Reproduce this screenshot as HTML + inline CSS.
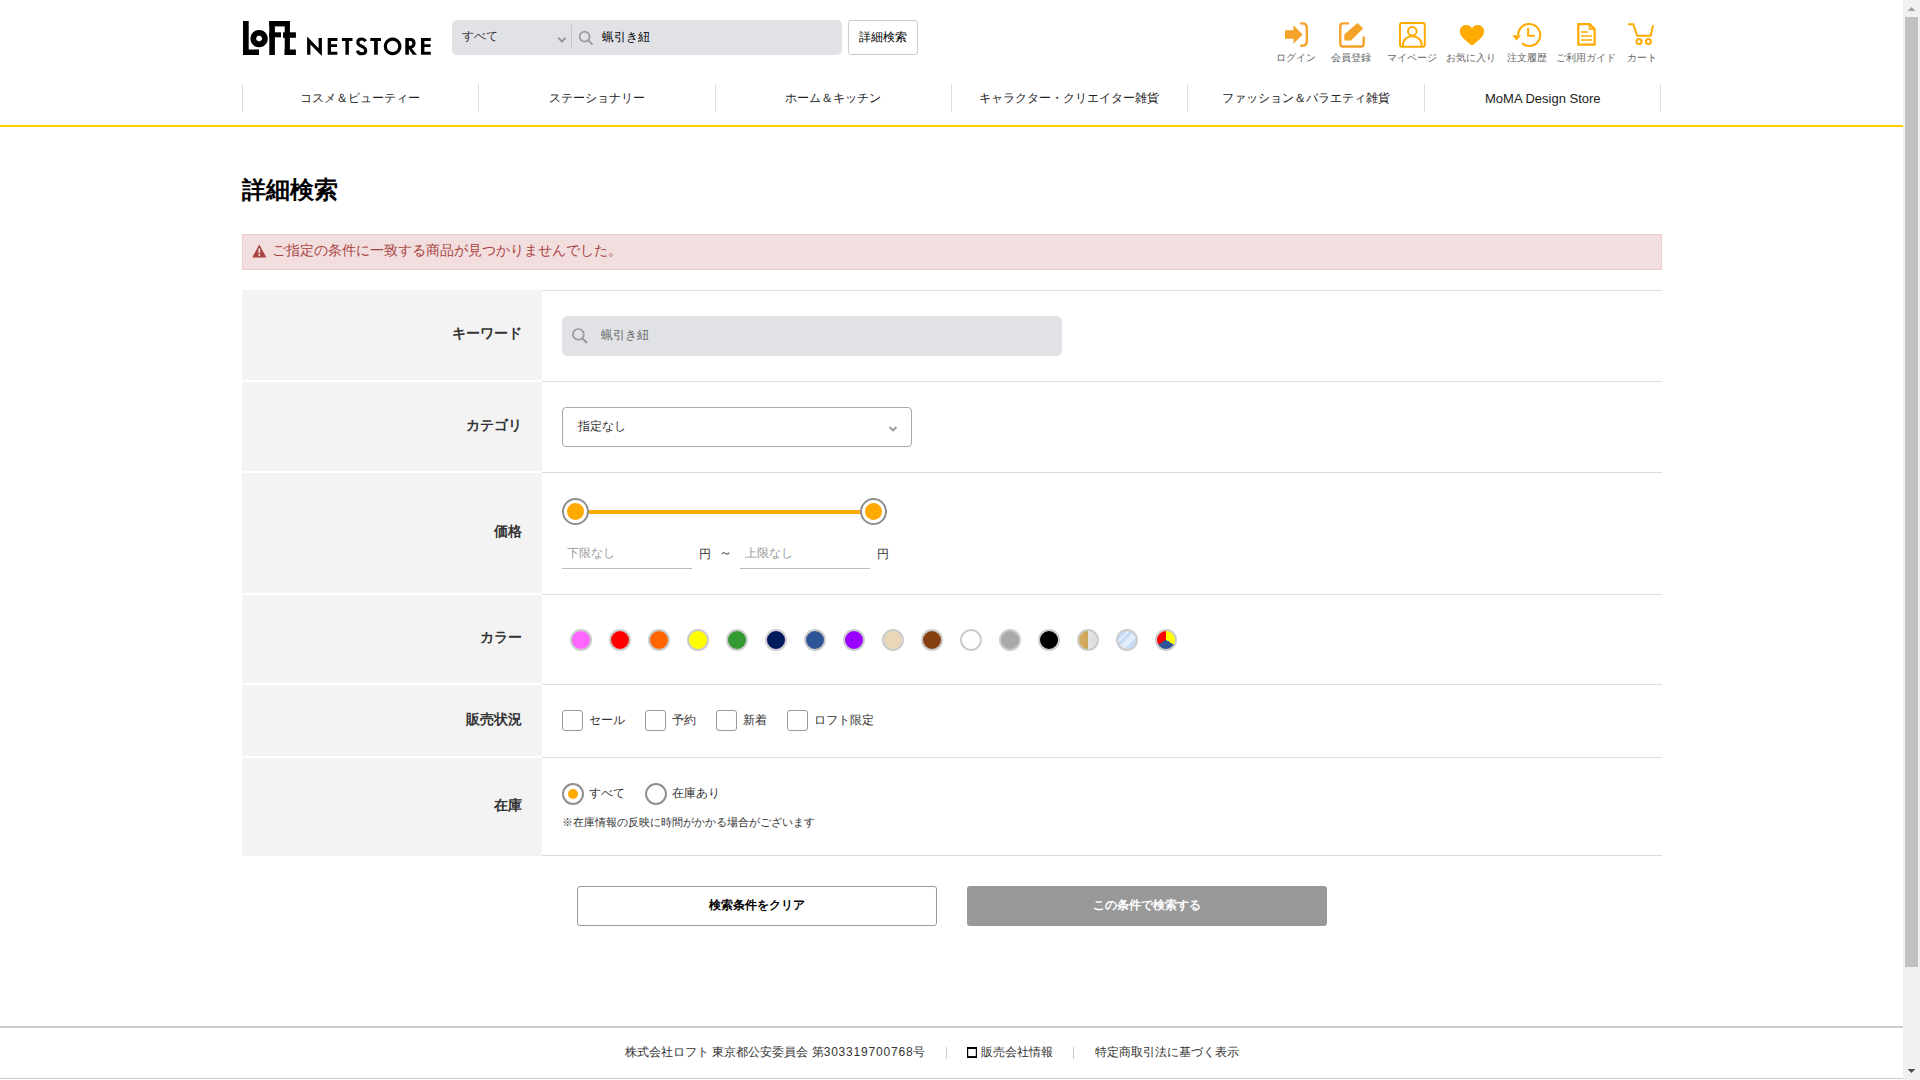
<!DOCTYPE html>
<html lang="ja"><head><meta charset="utf-8"><title>詳細検索</title>
<style>
*{box-sizing:border-box;margin:0;padding:0}
html,body{width:1920px;height:1080px;overflow:hidden;background:#fff}
body{position:relative;font-family:"Liberation Sans",sans-serif;color:#333}
.a{position:absolute}
.t{position:absolute;white-space:nowrap;line-height:1}
.lbl{top:52.5px;font-size:10px;color:#666;transform:translateX(-50%)}
.th{right:1398px;font-size:14px;font-weight:bold;color:#333}
.nav{top:92px;font-size:12px;color:#222;transform:translateX(-50%)}
</style></head><body>

<!-- HEADER -->
<svg class="a" style="left:0;top:0" width="460" height="70" viewBox="0 0 460 70">
 <g fill="#000">
  <!-- L -->
  <rect x="243" y="21" width="5.7" height="34"/>
  <rect x="243" y="49.5" width="16" height="5.5"/>
  <!-- o -->
  <path fill-rule="evenodd" d="M259.1,29.9a8.7,8.7 0 1,0 0.01,0z M259.1,35.7a2.9,2.9 0 1,1 -0.01,0z"/>
  <!-- F -->
  <rect x="269.3" y="21" width="5.6" height="34"/>
  <rect x="269.3" y="21" width="20.6" height="5.4"/>
  <rect x="269.3" y="32.3" width="11.7" height="5"/>
  <!-- t -->
  <rect x="284.7" y="21" width="5.2" height="34"/>
  <rect x="283" y="32.3" width="12.9" height="5.5"/>
  <rect x="284.7" y="49.5" width="11.2" height="5.5"/>
  <!-- N -->
  <path d="M307.1,54.8 L307.1,36.4 L318.6,48.2 L318.6,38 L321.9,38 L321.9,55.9 L310.4,44.6 L310.4,54.8 Z"/>
  <!-- E -->
  <path d="M327.7,38 H337.4 V40.9 H331 V44.2 H337 V47 H331 V51.7 H337.4 V54.8 H327.7 Z"/>
  <!-- T -->
  <path d="M341.9,38 H352.5 V40.9 H348.9 V54.8 H345.4 V40.9 H341.9 Z"/>
  <!-- S -->
  <path d="M365.6,41.2 C364.6,39.6 363.2,39 361.6,39 C359.4,39 357.8,40.3 357.8,42.4 C357.8,44.6 359.8,45.4 361.9,46.3 C364.1,47.2 365.7,48.2 365.7,50.7 C365.7,52.8 363.9,53.8 361.6,53.8 C359.5,53.8 357.9,52.6 357.5,50.6" fill="none" stroke="#000" stroke-width="3.1"/>
  <!-- T -->
  <path d="M370.3,38 H381 V40.9 H377.8 V54.8 H374.1 V40.9 H370.3 Z"/>
  <!-- O -->
  <path fill-rule="evenodd" d="M392.6,37.5a8.85,8.85 0 1,0 0.01,0z M392.6,40.7a5.65,5.65 0 1,1 -0.01,0z"/>
  <!-- R -->
  <path fill-rule="evenodd" d="M405.3,54.8 V38 H410.5 C413.8,38 415.6,40 415.6,43.3 C415.6,46 414.2,47.9 411.8,48.4 L417,54.8 H412.8 L408.9,49 V54.8 Z M408.9,40.9 V45.8 H410.3 C411.6,45.8 412.3,44.9 412.3,43.3 C412.3,41.8 411.6,40.9 410.3,40.9 Z"/>
  <!-- E -->
  <path d="M421,38 H430.8 V40.9 H424.4 V44.2 H430.5 V47 H424.4 V51.7 H430.8 V54.8 H421 Z"/>
 </g>
</svg>

<!-- search box -->
<div class="a" style="left:452px;top:20px;width:390px;height:35px;background:#e1e2e6;border-radius:5px"></div>
<div class="t" style="left:462px;top:30px;font-size:12px;color:#333">すべて</div>
<svg class="a" style="left:556px;top:35.5px" width="12" height="8" viewBox="0 0 12 8"><path d="M2.3,1.8 L6,5.5 L9.7,1.8" fill="none" stroke="#999" stroke-width="2"/></svg>
<div class="a" style="left:571px;top:25px;width:1px;height:23px;background:#c8c9cc"></div>
<svg class="a" style="left:578px;top:30px" width="16" height="16" viewBox="0 0 16 16"><circle cx="6.6" cy="6.6" r="5" fill="none" stroke="#999" stroke-width="1.6"/><path d="M10.3,10.3 L14.5,14.5" stroke="#999" stroke-width="1.8"/></svg>
<div class="t" style="left:602px;top:31px;font-size:12px;color:#000">蝋引き紐</div>
<div class="a" style="left:848px;top:20px;width:70px;height:35px;border:1px solid #ccc;border-radius:3px;background:#fff"></div>
<div class="t" style="left:859px;top:31px;font-size:12px;color:#000">詳細検索</div>

<!-- right icons placeholder -->
<svg class="a" style="left:1270px;top:15px" width="400" height="40" viewBox="1270 15 400 40">
 <!-- login -->
 <path d="M1285,30.3 H1293.5 V25.3 L1302.5,34.5 L1293.5,43.7 V38.7 H1285 Z" fill="#f5a229"/>
 <path d="M1300.2,23.4 H1302.5 C1305.2,23.4 1306.8,25 1306.8,27.8 V41.6 C1306.8,44.2 1305.2,45.8 1302.5,45.8 H1300.2" fill="none" stroke="#f5a229" stroke-width="2.4"/>
 <!-- register -->
 <path d="M1349,23.4 H1343 C1341.5,23.4 1340.3,24.6 1340.3,26.1 V43.8 C1340.3,45.3 1341.5,46.5 1343,46.5 H1361 C1362.5,46.5 1363.7,45.3 1363.7,43.8 V36.5" fill="none" stroke="#f5a229" stroke-width="2.4"/>
 <path d="M1357.5,23.1 L1363.2,28.6 L1351,40.6 H1344.3 V34.5 Z" fill="#f5a229"/>
 <!-- mypage -->
 <rect x="1400" y="23" width="24.8" height="23.8" rx="2" fill="none" stroke="#ffaa00" stroke-width="2"/>
 <circle cx="1412.3" cy="31.3" r="4.3" fill="none" stroke="#ffaa00" stroke-width="2"/>
 <path d="M1402.8,46.5 V45.5 C1402.8,40 1407,36.3 1412.3,36.3 C1417.6,36.3 1421.8,40 1421.8,45.5 V46.5" fill="none" stroke="#ffaa00" stroke-width="2"/>
 <!-- heart -->
 <path d="M1472,28.3 C1470.5,26 1468.6,25 1466.3,25 C1462.6,24.7 1459.9,27.6 1459.9,31.2 C1459.9,34.6 1462,37.2 1464.6,39.6 L1470.2,44.4 C1471.2,45.3 1472.8,45.3 1473.8,44.4 L1479.4,39.6 C1482,37.2 1484.1,34.6 1484.1,31.2 C1484.1,27.8 1481.4,25 1477.7,25 C1475.4,25 1473.5,26 1472,28.3 Z" fill="#ffaa00"/>
 <!-- history -->
 <path d="M1518.2,35 A11,11 0 1,1 1522.1,43.4" fill="none" stroke="#ffaa00" stroke-width="2.1"/>
 <path d="M1512.2,35.2 H1521 L1516.6,40.6 Z" fill="#ffaa00"/>
 <path d="M1528.1,28 V35.8 H1534.8" fill="none" stroke="#ffaa00" stroke-width="1.9"/>
 <!-- guide -->
 <path d="M1578.3,24.2 H1589.6 L1594.6,29 V44.6 H1578.3 Z" fill="none" stroke="#ffaa00" stroke-width="2.2"/>
 <path d="M1589.5,24.5 V28.9 H1594" fill="none" stroke="#ffaa00" stroke-width="1.6"/>
 <path d="M1581,32 H1588 M1581,36 H1592 M1581,40 H1592" stroke="#ffaa00" stroke-width="1.7"/>
 <!-- cart -->
 <path d="M1628,24.2 H1633.3 L1637.2,35.8 H1650.6 L1653.1,25.3" fill="none" stroke="#ffaa00" stroke-width="2"/>
 <circle cx="1639" cy="41.6" r="2.5" fill="none" stroke="#ffaa00" stroke-width="2"/>
 <circle cx="1648.4" cy="41.6" r="2.5" fill="none" stroke="#ffaa00" stroke-width="2"/>
</svg>
<div class="t lbl" style="left:1296px">ログイン</div>
<div class="t lbl" style="left:1351px">会員登録</div>
<div class="t lbl" style="left:1411.5px">マイページ</div>
<div class="t lbl" style="left:1471px">お気に入り</div>
<div class="t lbl" style="left:1526.5px">注文履歴</div>
<div class="t lbl" style="left:1586px">ご利用ガイド</div>
<div class="t lbl" style="left:1641.5px">カート</div>


<!-- NAV -->
<div class="a" style="left:242px;top:84px;width:1px;height:28px;background:#ddd"></div>
<div class="a" style="left:478px;top:84px;width:1px;height:28px;background:#ddd"></div>
<div class="a" style="left:715px;top:84px;width:1px;height:28px;background:#ddd"></div>
<div class="a" style="left:951px;top:84px;width:1px;height:28px;background:#ddd"></div>
<div class="a" style="left:1187px;top:84px;width:1px;height:28px;background:#ddd"></div>
<div class="a" style="left:1424px;top:84px;width:1px;height:28px;background:#ddd"></div>
<div class="a" style="left:1660px;top:84px;width:1px;height:28px;background:#ddd"></div>
<div class="t nav" style="left:360.2px">コスメ＆ビューティー</div>
<div class="t nav" style="left:596.5px">ステーショナリー</div>
<div class="t nav" style="left:832.8px">ホーム＆キッチン</div>
<div class="t nav" style="left:1069.2px">キャラクター・クリエイター雑貨</div>
<div class="t nav" style="left:1305.5px">ファッション＆バラエティ雑貨</div>
<div class="t nav" style="left:1542.8px;font-size:13px">MoMA Design Store</div>

<div class="a" style="left:0;top:125px;width:1903px;height:2px;background:#ffcc00"></div>

<!-- MAIN -->
<div class="t" style="left:242px;top:178px;font-size:24px;font-weight:bold;color:#000">詳細検索</div>

<div class="a" style="left:242px;top:234px;width:1420px;height:36px;background:#f2dede;border:1px solid #ebccd1"></div>

<svg class="a" style="left:252px;top:244px" width="15" height="14" viewBox="0 0 15 14"><path d="M7.3,0.5 L14.4,13.5 H0.2 Z" fill="#a94442"/><rect x="6.4" y="4.4" width="1.8" height="4.6" fill="#f2dede"/><rect x="6.4" y="10" width="1.8" height="1.8" fill="#f2dede"/></svg>
<div class="t" style="left:272px;top:243px;font-size:14px;color:#a94442">ご指定の条件に一致する商品が見つかりませんでした。</div>
<div class="a" style="left:542px;top:290px;width:1120px;height:1px;background:#ddd"></div>
<div class="a" style="left:242px;top:290px;width:300px;height:90px;background:#f3f3f3"></div>
<div class="a" style="left:542px;top:381px;width:1120px;height:1px;background:#ddd"></div>
<div class="t th" style="top:326px">キーワード</div>
<div class="a" style="left:242px;top:382px;width:300px;height:89px;background:#f3f3f3"></div>
<div class="a" style="left:542px;top:472px;width:1120px;height:1px;background:#ddd"></div>
<div class="t th" style="top:418px">カテゴリ</div>
<div class="a" style="left:242px;top:473px;width:300px;height:120px;background:#f3f3f3"></div>
<div class="a" style="left:542px;top:594px;width:1120px;height:1px;background:#ddd"></div>
<div class="t th" style="top:524px">価格</div>
<div class="a" style="left:242px;top:595px;width:300px;height:88px;background:#f3f3f3"></div>
<div class="a" style="left:542px;top:684px;width:1120px;height:1px;background:#ddd"></div>
<div class="t th" style="top:630px">カラー</div>
<div class="a" style="left:242px;top:685px;width:300px;height:71px;background:#f3f3f3"></div>
<div class="a" style="left:542px;top:757px;width:1120px;height:1px;background:#ddd"></div>
<div class="t th" style="top:712px">販売状況</div>
<div class="a" style="left:242px;top:758px;width:300px;height:98px;background:#f3f3f3"></div>
<div class="a" style="left:542px;top:855px;width:1120px;height:1px;background:#ddd"></div>
<div class="t th" style="top:798px">在庫</div>
<div class="a" style="left:562px;top:316px;width:500px;height:40px;background:#e1e2e6;border-radius:6px"></div>
<svg class="a" style="left:571px;top:327px" width="18" height="18" viewBox="0 0 18 18"><circle cx="7.4" cy="7.4" r="5.4" fill="none" stroke="#999" stroke-width="1.7"/><path d="M11.3,11.3 L16,16" stroke="#999" stroke-width="2"/></svg>
<div class="t" style="left:601px;top:329px;font-size:12px;color:#666">蝋引き紐</div>
<div class="a" style="left:562px;top:407px;width:350px;height:40px;border:1px solid #aaa;border-radius:4px;background:#fff"></div>
<div class="t" style="left:578px;top:420px;font-size:12px;color:#333">指定なし</div>
<svg class="a" style="left:888px;top:424.7px" width="10" height="8" viewBox="0 0 10 8"><path d="M1.5,2 L5,5.5 L8.5,2" fill="none" stroke="#999" stroke-width="1.8"/></svg>
<div class="a" style="left:588px;top:510px;width:273px;height:4px;background:#ffaa00"></div>
<div class="a" style="left:562px;top:498px;width:27px;height:27px;border:2px solid #8f8f8f;border-radius:50%;background:#fff"></div>
<div class="a" style="left:567px;top:503px;width:17px;height:17px;border-radius:50%;background:#ffaa00"></div>
<div class="a" style="left:860px;top:498px;width:27px;height:27px;border:2px solid #8f8f8f;border-radius:50%;background:#fff"></div>
<div class="a" style="left:865px;top:503px;width:17px;height:17px;border-radius:50%;background:#ffaa00"></div>
<div class="a" style="left:562px;top:568px;width:130px;height:1px;background:#bbb"></div>
<div class="a" style="left:740px;top:568px;width:130px;height:1px;background:#bbb"></div>
<div class="t" style="left:567px;top:547px;font-size:12px;color:#999">下限なし</div>
<div class="t" style="left:745px;top:547px;font-size:12px;color:#999">上限なし</div>
<div class="t" style="left:699px;top:548px;font-size:12px;color:#333">円</div>
<div class="t" style="left:719px;top:546px;font-size:13px;color:#333">～</div>
<div class="t" style="left:877px;top:548px;font-size:12px;color:#333">円</div>
<div class="a" style="left:570px;top:629px;width:22px;height:22px;border:2px solid #ccc;border-radius:50%;background:#ff66ff;background-origin:border-box"></div>
<div class="a" style="left:609px;top:629px;width:22px;height:22px;border:2px solid #ccc;border-radius:50%;background:#ff0000;background-origin:border-box"></div>
<div class="a" style="left:648px;top:629px;width:22px;height:22px;border:2px solid #ccc;border-radius:50%;background:#ff6600;background-origin:border-box"></div>
<div class="a" style="left:687px;top:629px;width:22px;height:22px;border:2px solid #ccc;border-radius:50%;background:#ffff00;background-origin:border-box"></div>
<div class="a" style="left:726px;top:629px;width:22px;height:22px;border:2px solid #ccc;border-radius:50%;background:#339933;background-origin:border-box"></div>
<div class="a" style="left:765px;top:629px;width:22px;height:22px;border:2px solid #ccc;border-radius:50%;background:#001a5e;background-origin:border-box"></div>
<div class="a" style="left:804px;top:629px;width:22px;height:22px;border:2px solid #ccc;border-radius:50%;background:#2f5597;background-origin:border-box"></div>
<div class="a" style="left:843px;top:629px;width:22px;height:22px;border:2px solid #ccc;border-radius:50%;background:#9900ff;background-origin:border-box"></div>
<div class="a" style="left:882px;top:629px;width:22px;height:22px;border:2px solid #ccc;border-radius:50%;background:#e8d8b8;background-origin:border-box"></div>
<div class="a" style="left:921px;top:629px;width:22px;height:22px;border:2px solid #ccc;border-radius:50%;background:#84400f;background-origin:border-box"></div>
<div class="a" style="left:960px;top:629px;width:22px;height:22px;border:2px solid #ccc;border-radius:50%;background:#ffffff;background-origin:border-box"></div>
<div class="a" style="left:999px;top:629px;width:22px;height:22px;border:2px solid #ccc;border-radius:50%;background:#aaaaaa;background-origin:border-box"></div>
<div class="a" style="left:1038px;top:629px;width:22px;height:22px;border:2px solid #ccc;border-radius:50%;background:#000000;background-origin:border-box"></div>
<div class="a" style="left:1077px;top:629px;width:22px;height:22px;border:2px solid #ccc;border-radius:50%;background:linear-gradient(90deg,#d9b060 0,#c9a458 50%,#e4e4e4 50%,#dcdcdc 100%);background-origin:border-box"></div>
<div class="a" style="left:1116px;top:629px;width:22px;height:22px;border:2px solid #ccc;border-radius:50%;background:linear-gradient(135deg,#c6dcf6 0,#c6dcf6 31%,#e6f0fb 31.5%,#e6f0fb 34.5%,#c6dcf6 35%,#c6dcf6 45.5%,#e3edfa 46%,#e3edfa 64%,#c6dcf6 64.5%,#c6dcf6 100%);background-origin:border-box"></div>
<div class="a" style="left:1155px;top:629px;width:22px;height:22px;border:2px solid #ccc;border-radius:50%;background:conic-gradient(#ffff00 0deg 120deg,#2f5597 120deg 240deg,#ff0000 240deg 360deg);background-origin:border-box"></div>
<div class="a" style="left:562px;top:710px;width:21px;height:21px;border:1px solid #999;border-radius:3px;background:#fff"></div>
<div class="t" style="left:589px;top:714px;font-size:12px;color:#333">セール</div>
<div class="a" style="left:645px;top:710px;width:21px;height:21px;border:1px solid #999;border-radius:3px;background:#fff"></div>
<div class="t" style="left:672px;top:714px;font-size:12px;color:#333">予約</div>
<div class="a" style="left:716px;top:710px;width:21px;height:21px;border:1px solid #999;border-radius:3px;background:#fff"></div>
<div class="t" style="left:743px;top:714px;font-size:12px;color:#333">新着</div>
<div class="a" style="left:787px;top:710px;width:21px;height:21px;border:1px solid #999;border-radius:3px;background:#fff"></div>
<div class="t" style="left:814px;top:714px;font-size:12px;color:#333">ロフト限定</div>
<div class="a" style="left:562px;top:783px;width:22px;height:22px;border:2px solid #8f8f8f;border-radius:50%"></div>
<div class="a" style="left:568px;top:789px;width:10px;height:10px;border-radius:50%;background:#ffaa00"></div>
<div class="t" style="left:589px;top:787px;font-size:12px;color:#333">すべて</div>
<div class="a" style="left:645px;top:783px;width:22px;height:22px;border:2px solid #8f8f8f;border-radius:50%"></div>
<div class="t" style="left:672px;top:787px;font-size:12px;color:#333">在庫あり</div>
<div class="t" style="left:562px;top:817px;font-size:11px;color:#333">※在庫情報の反映に時間がかかる場合がございます</div>
<div class="a" style="left:577px;top:886px;width:360px;height:40px;border:1px solid #999;border-radius:3px;background:#fff"></div>
<div class="t" style="left:757px;top:899px;font-size:12px;font-weight:bold;color:#000;transform:translateX(-50%)">検索条件をクリア</div>
<div class="a" style="left:967px;top:886px;width:360px;height:40px;border-radius:3px;background:#999"></div>
<div class="t" style="left:1147px;top:899px;font-size:12px;font-weight:bold;color:#fff;transform:translateX(-50%)">この条件で検索する</div>

<div class="a" style="left:0;top:1026px;width:1903px;height:2px;background:#ccc"></div>
<div class="a" style="left:0;top:1078px;width:1903px;height:1px;background:#ccc"></div>
<div class="t" style="left:625px;top:1046px;font-size:12px;color:#333">株式会社ロフト 東京都公安委員会 第<span style="letter-spacing:0.8px">303319700768</span>号</div>
<div class="a" style="left:946px;top:1047px;width:1px;height:12px;background:#ccc"></div>
<svg class="a" style="left:967px;top:1047px" width="10" height="11" viewBox="0 0 10 11"><rect x="0.6" y="1" width="8.8" height="9" fill="none" stroke="#000" stroke-width="1.2"/><rect x="0" y="0" width="10" height="2" fill="#000"/><rect x="0" y="9.2" width="10" height="1.8" fill="#000"/></svg>
<div class="t" style="left:981px;top:1046px;font-size:12px;color:#333">販売会社情報</div>
<div class="a" style="left:1073px;top:1047px;width:1px;height:12px;background:#ccc"></div>
<div class="t" style="left:1095px;top:1046px;font-size:12px;color:#333">特定商取引法に基づく表示</div>


<!-- scrollbar -->
<div class="a" style="left:1903px;top:0;width:17px;height:1080px;background:#f1f1f1"></div>
<div class="a" style="left:1905px;top:17px;width:13px;height:950px;background:#c1c1c1"></div>
<svg class="a" style="left:1903px;top:0" width="17" height="17"><path d="M4.5,11 L8.5,7 L12.5,11Z" fill="#a3a3a3"/></svg>
<svg class="a" style="left:1903px;top:1063px" width="17" height="17"><path d="M4.5,6 L8.5,10 L12.5,6Z" fill="#505050"/></svg>
</body></html>
